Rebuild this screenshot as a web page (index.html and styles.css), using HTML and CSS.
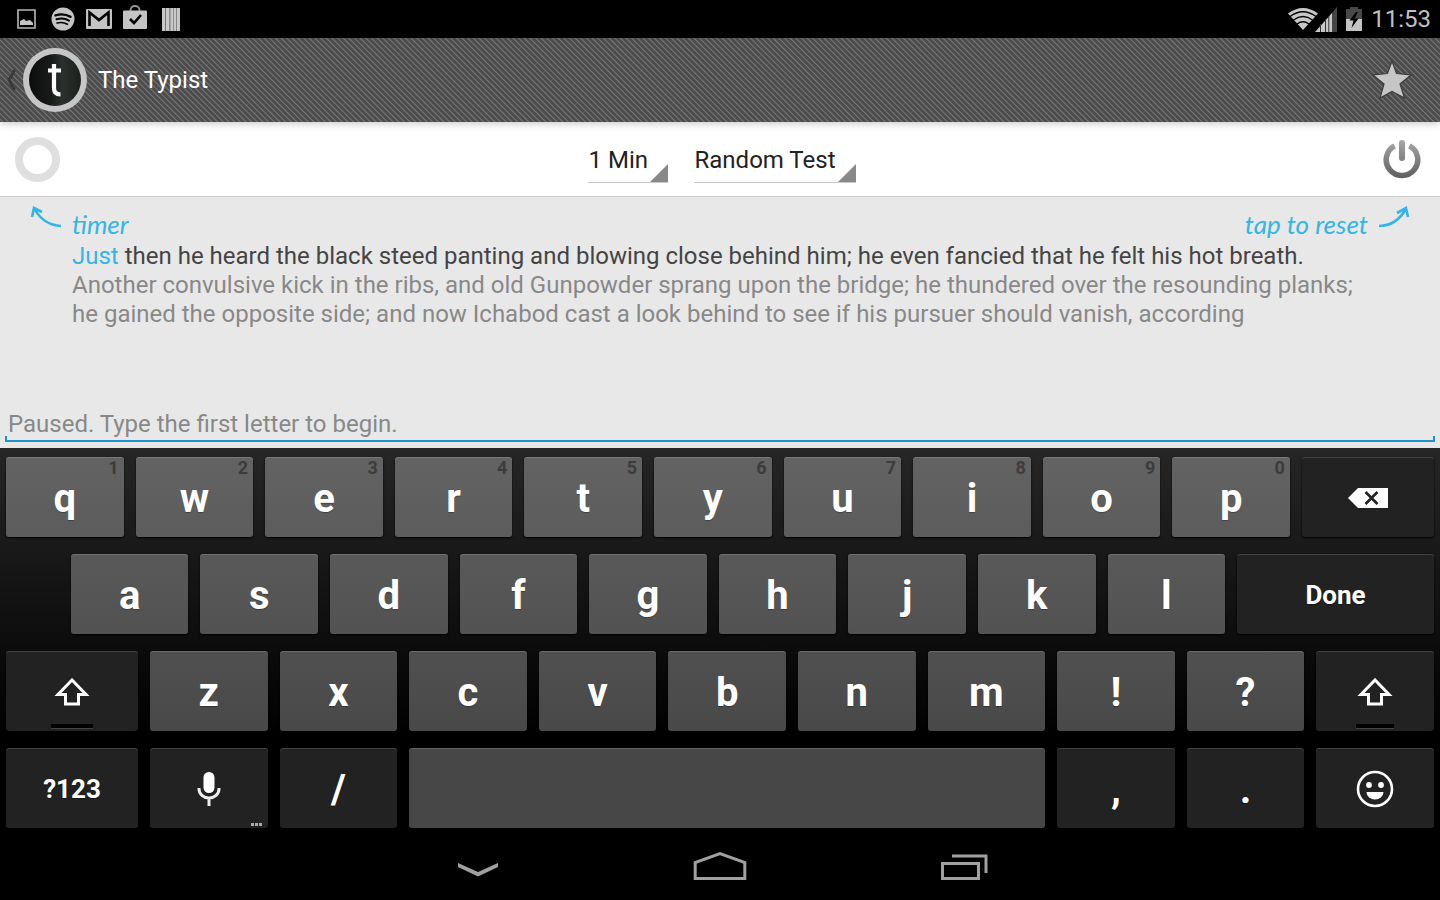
FILE: index.html
```
<!DOCTYPE html>
<html lang="en">
<head>
<meta charset="utf-8">
<title>The Typist</title>
<link rel="stylesheet" href="styles.css">
</head>
<body>
<div class="screen">
  <div class="status-bar">
    <div class="notifications">
      <svg class="notif" width="19" height="20" viewBox="0 0 19 20"><path d="M1 1h17v18H1z" fill="none" stroke="#b8b8b8" stroke-width="1.6"/><path d="M3 16v-4l4-2 2 2 4-1 3 3v2z" fill="#c4c4c4"/></svg>
      <svg class="notif" width="24" height="24" viewBox="0 0 24 24"><circle cx="12" cy="12" r="11.5" fill="#c4c4c4"/><g fill="none" stroke="#000" stroke-linecap="round"><path d="M4.500 8.300q8-2.500 15 1.500" stroke-width="2.400"/><path d="M5.500 12.300q7-2 12.500 1.300" stroke-width="2"/><path d="M6 16q5.500-1.500 10.500 1.200" stroke-width="1.600"/></g></svg>
      <svg class="notif" width="26" height="20" viewBox="0 0 26 20"><rect width="26" height="20" rx="1" fill="#c4c4c4"/><path d="M3.500 17V3.500L13 11l9.500-7.500V17" fill="none" stroke="#000" stroke-width="2.600"/></svg>
      <svg class="notif bag" width="24" height="24" viewBox="0 0 24 24"><path d="M7.500 6.500V5a4.500 4 0 0 1 9 0v1.500" fill="none" stroke="#999" stroke-width="1.800"/><rect y="5.500" width="24" height="18.500" rx="1" fill="#c4c4c4"/><path d="M7 14l4 4 7-8" fill="none" stroke="#000" stroke-width="2.600"/></svg>
      <svg class="notif" width="18" height="23" viewBox="0 0 18 23"><path d="M0 0h18v23H0z" fill="#777"/><path d="M0 0h3v23H0zM4 0h3.300v23H4zM8.500 0h2.800v23H8.500zM12 0h2.200v23H12zM15 0h3v23h-3z" fill="#c8c8c8"/></svg>
    </div>
    <div class="system">
      <svg width="30" height="24" viewBox="0 0 30 24"><path d="M0 6.500Q15-4.500 30 6.500L15 23z" fill="#c8c8c8"/><g fill="none" stroke="#000" stroke-width="1.300"><path d="M2 9.500q13-9.500 26 0M5.500 13q9.500-7 19 0M9 17q6-4.500 12 0"/></g></svg>
      <svg class="signal" width="22" height="25" viewBox="0 0 22 25"><path d="M22 0v25h-5V6z" fill="#444"/><path d="M17 6v19H0z" fill="#c8c8c8"/><path d="M5.500 17v8M10.500 12v13M13.800 9v16" stroke="#333" stroke-width="1"/></svg>
      <svg class="battery" width="16" height="24" viewBox="0 0 16 24"><path d="M4 0h8v2h4v10H0V2h4z" fill="#484848"/><path d="M0 12h16v12H0z" fill="#c4c4c4"/><path d="M10 5L3.500 13.500H7.500L5.500 21l7-9.500H8.500L12 5z" fill="#000"/></svg>
      <time class="clock">11:53</time>
    </div>
  </div>

  <header class="action-bar">
    <button class="home" aria-label="Navigate up">
      <svg class="caret" width="10" height="22" viewBox="0 0 10 22"><path d="M8.500 1L3 11l5.500 10" fill="none" stroke="#3a3a3a" stroke-width="3"/></svg>
      <svg width="66" height="66" viewBox="0 0 66 66"><defs><linearGradient id="disc"><stop offset="0" stop-color="#0c0c0c"/><stop offset=".4" stop-color="#181a19"/><stop offset=".65" stop-color="#2b302d"/><stop offset="1" stop-color="#1c1f1d"/></linearGradient></defs><circle cx="33" cy="33" r="32" fill="#c6c6c8"/><circle cx="33" cy="33" r="26" fill="url(#disc)"/><path d="M32 17v24q0 6.500 6.500 6.500M26 23.500h13" fill="none" stroke="#fff" stroke-width="4.200"/></svg>
    </button>
    <h1 class="title">The Typist</h1>
    <button class="favorite" aria-label="Favorite"><svg width="42" height="42" viewBox="0 0 42 42"><path d="M21 2l4.500 12.500L40 16 29 25l4.500 14L21 32.500 9 39l4-14L2 16l14.500-1.500z" fill="#c6c6c6" stroke="#3c3c3c" stroke-width="1.200"/></svg></button>
  </header>

  <div class="toolbar">
    <div class="timer-ring" role="img" aria-label="Timer"></div>
    <div class="spinners">
      <select class="spinner" aria-label="Duration"><option>1 Min</option></select>
      <select class="spinner" aria-label="Test"><option>Random Test</option></select>
    </div>
    <button class="reset" aria-label="Reset"><svg width="38" height="40" viewBox="0 0 38 40"><defs><linearGradient id="power" x1="0" y1="0" x2="0" y2="40" gradientUnits="userSpaceOnUse"><stop offset="0" stop-color="#aaa"/><stop offset="1" stop-color="#5c5c5c"/></linearGradient></defs><path d="M11.500 6.800A15.800 15.800 0 1 0 26.500 6.800" fill="none" stroke="url(#power)" stroke-width="5.500"/><path d="M16 4a3 3 0 0 1 6 0v15a3 3 0 0 1-6 0z" fill="url(#power)"/></svg></button>
  </div>

  <main class="test">
    <div class="hints">
      <span class="hint"><svg width="32" height="22" viewBox="0 0 32 22"><path d="M31 20Q13 19 4 2M2 11L4 2l8 4" fill="none" stroke="#33b5e5" stroke-width="2.600"/></svg>timer</span>
      <span class="hint">tap to reset<svg width="32" height="22" viewBox="0 0 32 22"><path d="M1 20Q18 20 28 3M19 7l9-5 2 9" fill="none" stroke="#33b5e5" stroke-width="2.600"/></svg></span>
    </div>
    <p class="passage"><span class="current"><span class="word">Just</span> then he heard the black steed panting and blowing close behind him; he even fancied that he felt his hot breath.</span><br>Another convulsive kick in the ribs, and old Gunpowder sprang upon the bridge; he thundered over the resounding planks; he gained the opposite side; and now Ichabod cast a look behind to see if his pursuer should vanish, according</p>
    <div class="entry"><input class="entry-box" type="text" aria-label="Typing input" placeholder="Paused. Type the first letter to begin."></div>
  </main>

  <div class="keyboard">
    <div class="row">
      <button class="key">q<span class="alt">1</span></button><button class="key">w<span class="alt">2</span></button><button class="key">e<span class="alt">3</span></button><button class="key">r<span class="alt">4</span></button><button class="key">t<span class="alt">5</span></button><button class="key">y<span class="alt">6</span></button><button class="key">u<span class="alt">7</span></button><button class="key">i<span class="alt">8</span></button><button class="key">o<span class="alt">9</span></button><button class="key">p<span class="alt">0</span></button>
      <button class="key dark fill" aria-label="Delete"><svg width="40" height="20" viewBox="0 0 40 20"><path d="M0 10L10 0h30v20H10z" fill="#fff"/><path d="M17.500 4l12 12M29.500 4l-12 12" stroke="#222" stroke-width="2.600"/></svg></button>
    </div>
    <div class="row home-row">
      <button class="key">a</button><button class="key">s</button><button class="key">d</button><button class="key">f</button><button class="key">g</button><button class="key">h</button><button class="key">j</button><button class="key">k</button><button class="key">l</button>
      <button class="key dark fill label">Done</button>
    </div>
    <div class="row">
      <button class="key dark wide shift" aria-label="Shift"><svg width="36" height="28" viewBox="0 0 36 28"><path d="M18 2L4 16.500H11.500V26h13v-9.500H32z" fill="none" stroke="#fff" stroke-width="3"/></svg></button>
      <button class="key">z</button><button class="key">x</button><button class="key">c</button><button class="key">v</button><button class="key">b</button><button class="key">n</button><button class="key">m</button><button class="key">!</button><button class="key">?</button>
      <button class="key dark fill shift" aria-label="Shift"><svg width="36" height="28" viewBox="0 0 36 28"><path d="M18 2L4 16.500H11.500V26h13v-9.500H32z" fill="none" stroke="#fff" stroke-width="3"/></svg></button>
    </div>
    <div class="row">
      <button class="key dark wide label">?123</button>
      <button class="key dark" aria-label="Voice input"><svg width="24" height="34" viewBox="0 0 24 34"><rect x="6.500" y="0" width="11" height="21" rx="5.500" fill="#fff"/><path d="M2 16v1a10 9 0 0 0 20 0v-1M12 26v8" fill="none" stroke="#eee" stroke-width="3"/></svg><span class="more"><i></i><i></i><i></i></span></button>
      <button class="key dark">/</button>
      <button class="key space" aria-label="Space"></button>
      <button class="key dark">,</button><button class="key dark">.</button>
      <button class="key dark fill" aria-label="Emoji"><svg width="38" height="38" viewBox="0 0 38 38"><circle cx="19" cy="19" r="17" fill="none" stroke="#fff" stroke-width="2.600"/><circle cx="13" cy="15" r="2.900" fill="#fff"/><circle cx="25" cy="15" r="2.900" fill="#fff"/><path d="M10.500 22h17a8.500 7.500 0 0 1-17 0z" fill="#fff"/></svg></button>
    </div>
  </div>

  <nav class="nav-bar">
    <button aria-label="Hide keyboard"><svg width="54" height="30" viewBox="0 0 54 30"><path d="M7 12l20 9 20-9v4L27 25.500 7 16z" fill="#a0a0a0"/></svg></button>
    <button aria-label="Home"><svg width="54" height="30" viewBox="0 0 54 30"><path d="M2.200 27.500V11.500L27 2.500l24.800 9v16z" fill="none" stroke="#a0a0a0" stroke-width="3"/></svg></button>
    <button aria-label="Recent apps"><svg width="54" height="30" viewBox="0 0 54 30"><path d="M5.500 12.500h36v15h-36zM15 5h34v17" fill="none" stroke="#a0a0a0" stroke-width="3"/></svg></button>
  </nav>
</div>
</body>
</html>
```

FILE: styles.css
```
* { box-sizing: border-box; }
body { margin: 0; background: #000; font-family: Roboto, "Liberation Sans", sans-serif; }
button { border: 0; padding: 0; background: none; color: inherit; font: inherit; }
svg { display: block; flex: none; }
.screen { display: flex; flex-direction: column; min-height: 100vh; }

.status-bar { display: flex; justify-content: space-between; align-items: center; height: 38px; padding: 0 9px 0 17px; background: #000; color: #c0c0c0; }
.notifications, .system { display: flex; align-items: center; }
.notifications { gap: 11px; }
.notifications .notif:nth-child(1) { margin-right: 4px; }
.bag { margin-bottom: 4px; }
.notifications .notif:last-child { margin-left: 4px; }
.signal { margin-left: -3px; }
.battery { margin: 0 9px 0 9px; }
.clock { font-size: 24px; line-height: 36px; }

.action-bar { position: relative; display: flex; align-items: center; height: 84px; padding: 0 27px 0 6px; color: #fff; background: repeating-linear-gradient(45deg, #4c4c4c 0 1px, #787878 2px, #4c4c4c 3px 4px); box-shadow: 0 1px 8px rgba(0, 0, 0, .25); }
.home { display: flex; align-items: center; gap: 6px; }
.title { margin: 0 auto 0 10px; font-size: 24px; line-height: 32px; font-weight: 400; }

.toolbar { display: flex; align-items: center; justify-content: space-between; height: 75px; padding: 0 19px 0 15px; background: #fff; border-bottom: 1px solid #ccc; }
.timer-ring { width: 45px; height: 45px; border: 8px solid #dfdfdf; border-radius: 50%; }
.spinners { display: flex; gap: 26px; }
.spinner { appearance: none; height: 47px; padding: 1px 19px 0 1px; border: 0; border-bottom: 1px solid #c6c6c6; border-radius: 0; font: 24px/46px Roboto, "Liberation Sans", sans-serif; color: #222; background: linear-gradient(135deg, transparent 49%, #888 51%) right bottom / 18px 18px no-repeat; }

.test { display: flex; flex-direction: column; flex: 1; background: #e8e8e8; }
.hints { display: flex; justify-content: space-between; padding: 9px 30px 0; }
.hint { display: flex; gap: 10px; font: italic 26px/36px Lato, "Open Sans", sans-serif; color: #33b5e5; }
.passage { margin: 0; padding: 0 72px; font-size: 24px; line-height: 29px; color: #888; }
.current { color: #444; }
.word { color: #33b5e5; }
.entry { margin-top: auto; padding: 0 5px 6px; }
.entry-box { display: block; width: 100%; height: 34px; padding: 0 3px 2px; border: 0; font: 24px/30px Roboto, "Liberation Sans", sans-serif; color: #444; background: linear-gradient(#1e93cd, #1e93cd) left bottom / 2px 6px no-repeat, linear-gradient(#1e93cd, #1e93cd) right bottom / 2px 6px no-repeat, linear-gradient(#1e93cd, #1e93cd) bottom / 100% 2px no-repeat; }
.entry-box::placeholder { color: #888; opacity: 1; }

.keyboard { display: flex; flex-direction: column; gap: 17px; padding: 9px 0 8px; background: linear-gradient(#262626, #000 75%); color: #fff; }
.row { display: flex; }
.home-row { padding-left: 4.5%; }
.key { position: relative; display: flex; align-items: center; justify-content: center; flex: 0 0 calc(9vw - 12px); height: 80px; margin: 0 6px; padding-top: 2px; border-radius: 3px; font-size: 40px; font-weight: 700; background: linear-gradient(#636363, #5c5c5c); box-shadow: inset 0 1px 0 rgba(255, 255, 255, .15), 0 1px 2px #000; text-shadow: 0 1px 1px rgba(0, 0, 0, .3); }
.row:nth-child(2) .key { background: linear-gradient(#595959, #525252); }
.row:nth-child(3) .key { background: linear-gradient(#505050, #494949); }
.row:nth-child(4) .key { background: #474747; }
.row .key.dark { background: #222; }
.key.fill { flex: 1; }
.key.wide { flex-basis: calc(10vw - 12px); }
.key.space { flex-basis: calc(45vw - 12px); }
.key.label { font-size: 26px; }
.alt { position: absolute; top: 1px; right: 5px; font-size: 18px; line-height: 20px; color: #3c3c3c; text-shadow: none; }
.shift::after { content: ""; position: absolute; bottom: 2px; left: 34%; right: 34%; height: 4px; background: #000; border-bottom: 1px solid #444; }
.more { position: absolute; right: 6px; bottom: 2px; display: flex; gap: 1px; }
.more i { width: 3px; height: 3px; background: #aaa; }

.nav-bar { display: flex; justify-content: center; align-items: center; gap: 190px; height: 64px; background: #000; }
.nav-bar button { padding-bottom: 4px; }
.nav-bar button:first-child { margin-left: 2px; margin-right: -2px; }
```
